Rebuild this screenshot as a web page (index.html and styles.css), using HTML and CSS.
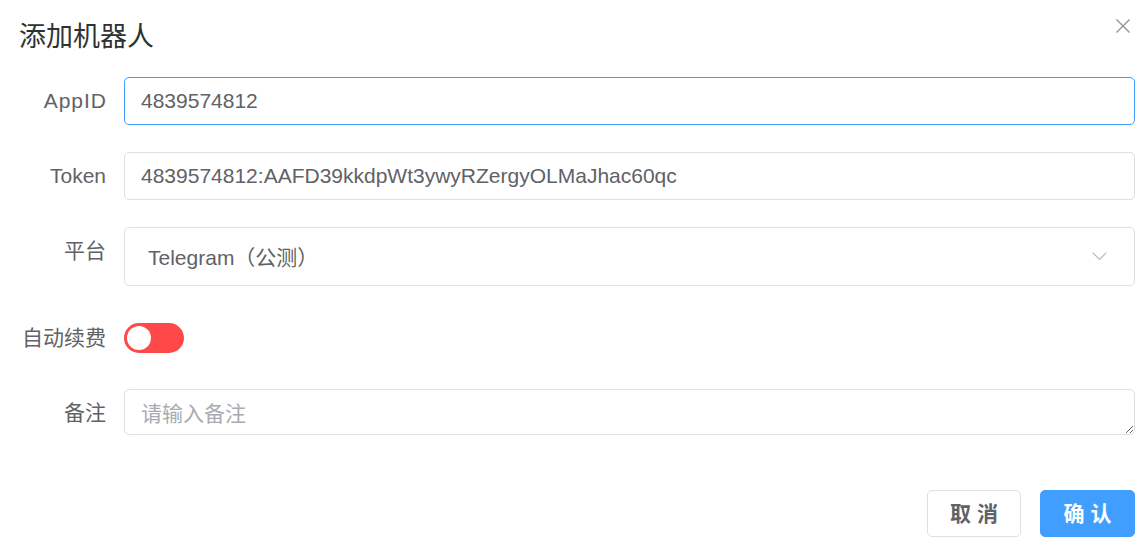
FILE: index.html
```html
<!DOCTYPE html>
<html lang="zh-CN">
<head>
<meta charset="utf-8">
<title>添加机器人</title>
<link rel="stylesheet" href="styles.css">
</head>
<body>
<div class="dialog">
  <header class="dialog-header">
    <h2 class="dialog-title">添加机器人</h2>
    <button class="dialog-close" type="button" aria-label="关闭">
      <svg width="14" height="14" viewBox="0 0 14 14"><path d="M0.5 0.5 L13.5 13.5 M13.5 0.5 L0.5 13.5" stroke="#909399" stroke-width="1.4" fill="none"/></svg>
    </button>
  </header>
  <form class="form">
    <div class="form-item">
      <label class="form-label form-label-wide">AppID</label>
      <div class="form-control"><input class="input is-focus" value="4839574812"></div>
    </div>
    <div class="form-item">
      <label class="form-label">Token</label>
      <div class="form-control"><input class="input" value="4839574812:AAFD39kkdpWt3ywyRZergyOLMaJhac60qc"></div>
    </div>
    <div class="form-item form-item-tall">
      <label class="form-label">平台</label>
      <div class="form-control">
        <div class="select">
          <span class="select-value">Telegram（公测）</span>
          <svg class="select-arrow" width="15" height="8" viewBox="0 0 15 8"><path d="M0.6 0.6 L7.5 7.4 L14.4 0.6" stroke="#b4b7bf" stroke-width="1.2" fill="none"/></svg>
        </div>
      </div>
    </div>
    <div class="form-item">
      <label class="form-label">自动续费</label>
      <div class="form-control form-control-center">
        <span class="switch"><span class="switch-knob"></span></span>
      </div>
    </div>
    <div class="form-item form-item-last">
      <label class="form-label">备注</label>
      <div class="form-control"><textarea class="textarea" placeholder="请输入备注"></textarea></div>
    </div>
  </form>
  <footer class="dialog-footer">
    <button class="btn" type="button">取 消</button>
    <button class="btn btn-primary" type="button">确 认</button>
  </footer>
</div>
</body>
</html>
```
FILE: styles.css
```css
html, body {
  margin: 0;
  padding: 0;
  background: #ffffff;
}

body {
  font-family: "Liberation Sans", "Noto Sans CJK SC", sans-serif;
  font-size: 21px;
  color: #606266;
}

.dialog {
  padding: 0 11px 0 0;
}

.dialog-header {
  display: flex;
  justify-content: space-between;
  align-items: flex-start;
  padding: 19px 0 0 19px;
}

.dialog-title {
  margin: 0;
  font-size: 27px;
  line-height: 36px;
  font-weight: normal;
  color: #303133;
}

.dialog-close {
  margin: 0 5px 0 0;
  padding: 0;
  border: 0;
  background: transparent;
  width: 14px;
  height: 14px;
  display: flex;
  cursor: pointer;
}

.form {
  margin-top: 22px;
}

.form-item {
  display: flex;
  align-items: flex-start;
  margin-bottom: 27px;
}

.form-item-tall {
  margin-bottom: 28px;
}

.form-item-last {
  margin-bottom: 0;
}

.form-label {
  flex: 0 0 124px;
  box-sizing: border-box;
  padding-right: 18px;
  text-align: right;
  line-height: 48px;
  color: #606266;
}

.form-label-wide {
  letter-spacing: 1px;
  padding-right: 17px;
}

.form-control {
  flex: 1;
  min-width: 0;
}

.form-control-center {
  height: 48px;
  display: flex;
  align-items: center;
}

.input {
  display: block;
  width: 100%;
  box-sizing: border-box;
  height: 48px;
  padding: 0 16px;
  border: 1px solid #dcdfe6;
  border-radius: 5px;
  font: inherit;
  color: #606266;
  background: #fff;
  outline: none;
}

.input.is-focus {
  border-color: #409eff;
}

.select {
  display: flex;
  align-items: center;
  justify-content: space-between;
  box-sizing: border-box;
  height: 59px;
  padding: 0 27px 2px 23px;
  border: 1px solid #dcdfe6;
  border-radius: 5px;
  color: #606266;
}

.select-arrow {
  display: block;
}

.switch {
  display: inline-flex;
  align-items: center;
  box-sizing: border-box;
  width: 60px;
  height: 30px;
  padding: 0 3px;
  border-radius: 15px;
  background: #ff4949;
}

.switch-knob {
  width: 24px;
  height: 24px;
  border-radius: 50%;
  background: #ffffff;
}

.textarea {
  display: block;
  width: 100%;
  box-sizing: border-box;
  height: 46px;
  padding: 7px 16px;
  line-height: 30px;
  border: 1px solid #dcdfe6;
  border-radius: 5px;
  font: inherit;
  color: #606266;
  resize: vertical;
  outline: none;
}

.textarea::placeholder {
  color: #a8abb2;
}

.dialog-footer {
  display: flex;
  justify-content: flex-end;
  gap: 19px;
  padding-top: 53px;
}

.btn {
  box-sizing: border-box;
  height: 47px;
  width: 94px;
  padding: 0 0 4px 0;
  border: 1px solid #dcdfe6;
  border-radius: 5px;
  background: #ffffff;
  font-family: inherit;
  font-size: 21px;
  font-weight: 600;
  color: #606266;
  cursor: pointer;
}

.btn-primary {
  width: 95px;
  border-color: #409eff;
  background: #409eff;
  color: #ffffff;
}
```
